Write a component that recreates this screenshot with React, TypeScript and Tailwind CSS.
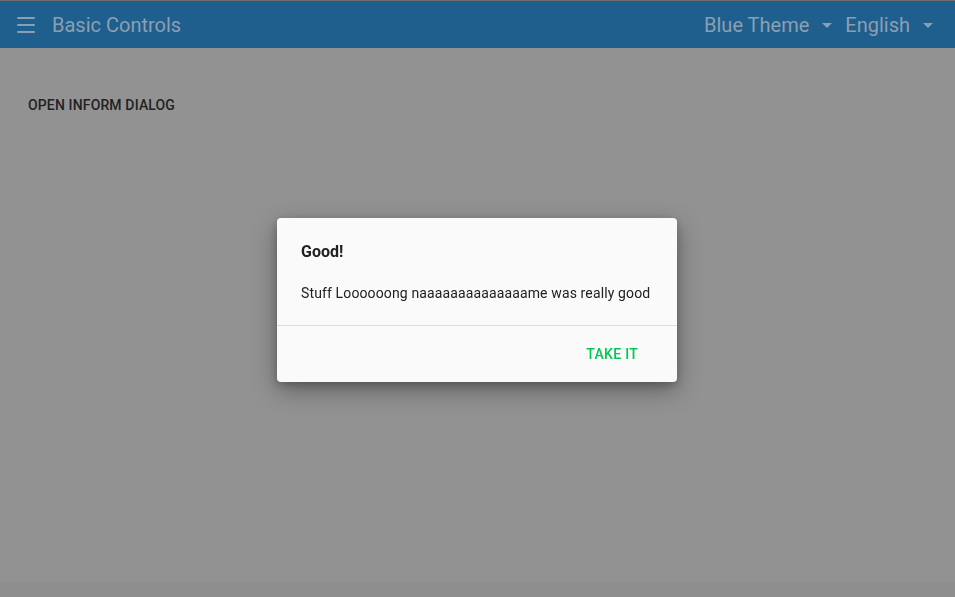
import { Menu } from 'lucide-react'

/**
 * Basic Controls — inform dialog open over the dimmed page.
 * Colours are the scrim-dimmed values, taken straight from the screenshot.
 */

function Caret() {
  return (
    <svg width="10" height="5" viewBox="0 0 10 5" className="ml-[13px] mt-[2px] fill-[#8b9fb2]">
      <path d="M0 0h10L5 5z" />
    </svg>
  )
}

function Header() {
  return (
    <header className="flex h-[48px] shrink-0 items-center border-t border-[#6e6e6e] bg-[#1f5f8e] pl-[14px] pr-[22px] text-[#8b9fb2]">
      <Menu className="h-6 w-6" strokeWidth={2} />
      <span className="ml-[14px] text-[20px] leading-none">Basic Controls</span>
      <div className="ml-auto flex items-center">
        <button type="button" className="flex items-center text-[20px] leading-none">
          Blue Theme
          <Caret />
        </button>
        <button type="button" className="ml-[13px] flex items-center text-[20px] leading-none">
          English
          <Caret />
        </button>
      </div>
    </header>
  )
}

function InformDialog() {
  return (
    <div className="fixed inset-0 flex items-center justify-center pt-[2px] pr-[1px]">
      <div className="w-[400px] rounded-[4px] bg-[#fafafa] text-[#212121] shadow-[0_8px_24px_rgba(0,0,0,0.35),0_3px_8px_rgba(0,0,0,0.2)]">
        <div className="px-6 pt-[22px] pb-[22px]">
          <h2 className="text-[16px] font-bold leading-6">Good!</h2>
          <p className="mt-[19px] text-[14px] leading-5 tracking-[0.13px]">
            Stuff Loooooong naaaaaaaaaaaaaame was really good
          </p>
        </div>
        <div className="flex justify-end border-t border-[#dcdcdc] pt-[11px] pr-[23px] pb-[9px]">
          <button
            type="button"
            className="h-9 rounded px-4 text-[14px] font-medium uppercase tracking-[0.02em] text-[#00c853]"
          >
            Take it
          </button>
        </div>
      </div>
    </div>
  )
}

export default function App() {
  return (
    <div className="flex h-screen flex-col bg-[#929292] font-['Roboto',sans-serif]">
      <Header />
      <main className="flex-1 px-[28px] pt-[45px]">
        <button
          type="button"
          className="text-[14px] font-medium uppercase leading-4 tracking-[0.01em] text-[#222222]"
        >
          Open inform dialog
        </button>
      </main>
      <div className="h-[15px] shrink-0 bg-[#8e8e8e]" />
      <InformDialog />
    </div>
  )
}
